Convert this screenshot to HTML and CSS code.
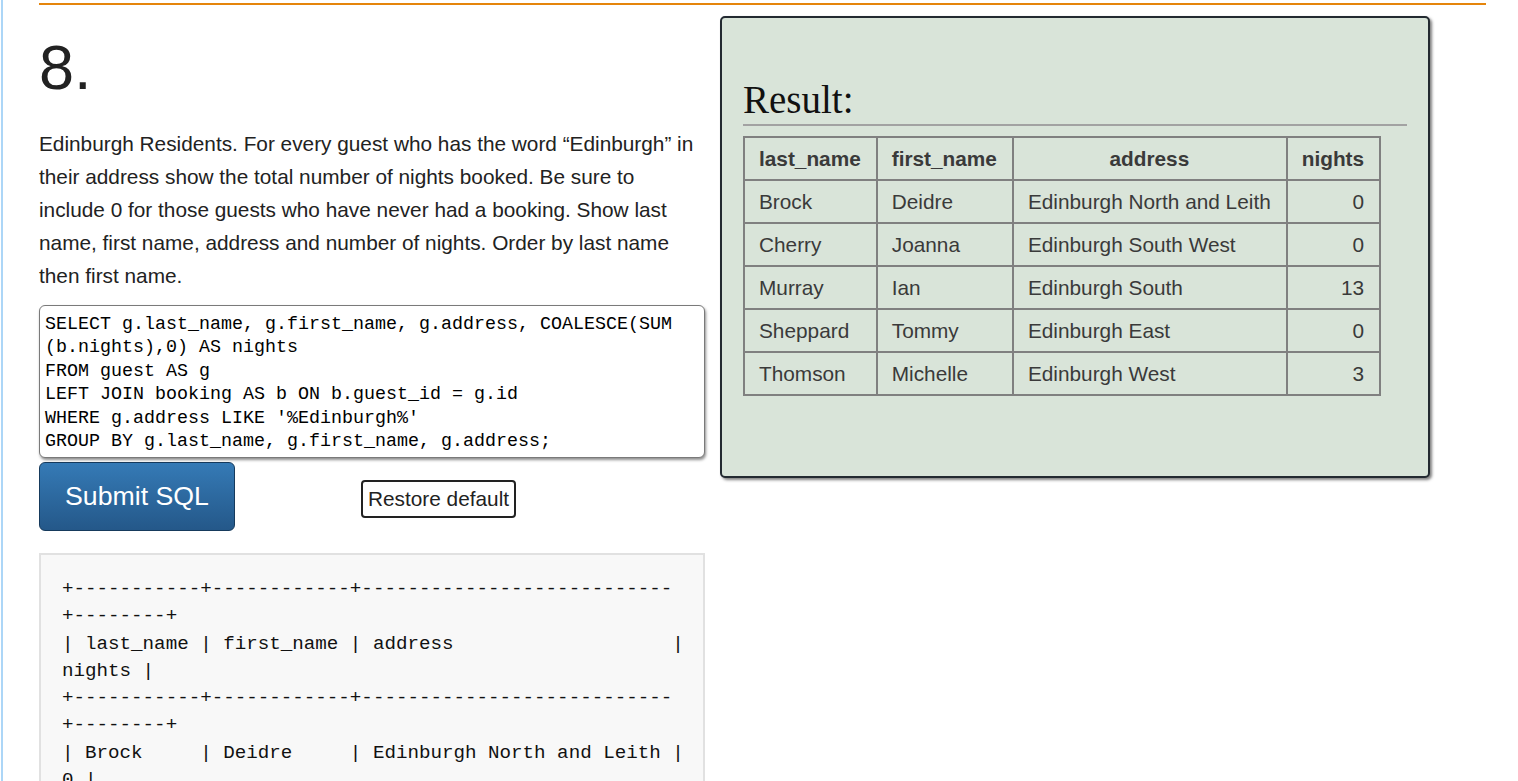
FILE: index.html
```html
<!DOCTYPE html>
<html lang="en">
<head>
<meta charset="utf-8">
<title>SQL Exercise 8</title>
<link rel="stylesheet" href="styles.css">
</head>
<body>
<div class="page">
  <div class="rule"></div>
  <div class="row">
    <div class="left">
      <h1 class="qnum">8.</h1>
      <p class="question">Edinburgh Residents. For every guest who has the word “Edinburgh” in their address show the total number of nights booked. Be sure to include 0 for those guests who have never had a booking. Show last name, first name, address and number of nights. Order by last name then first name.</p>
      <textarea class="sql" spellcheck="false">SELECT g.last_name, g.first_name, g.address, COALESCE(SUM(b.nights),0) AS nights
FROM guest AS g
LEFT JOIN booking AS b ON b.guest_id = g.id
WHERE g.address LIKE '%Edinburgh%'
GROUP BY g.last_name, g.first_name, g.address;</textarea>
      <div class="actions">
        <button class="btn-submit" type="button">Submit SQL</button>
        <button class="btn-restore" type="button">Restore default</button>
      </div>
      <pre class="output">+-----------+------------+---------------------------+--------+
| last_name | first_name | address                   | nights |
+-----------+------------+---------------------------+--------+
| Brock     | Deidre     | Edinburgh North and Leith |      0 |
| Cherry    | Joanna     | Edinburgh South West      |      0 |
| Murray    | Ian        | Edinburgh South           |     13 |
| Sheppard  | Tommy      | Edinburgh East            |      0 |
| Thomson   | Michelle   | Edinburgh West            |      3 |
+-----------+------------+---------------------------+--------+</pre>
    </div>
    <div class="result">
      <h2 class="result-title">Result:</h2>
      <table class="result-table">
        <thead>
          <tr><th>last_name</th><th>first_name</th><th class="center">address</th><th>nights</th></tr>
        </thead>
        <tbody>
          <tr><td>Brock</td><td>Deidre</td><td>Edinburgh North and Leith</td><td class="num">0</td></tr>
          <tr><td>Cherry</td><td>Joanna</td><td>Edinburgh South West</td><td class="num">0</td></tr>
          <tr><td>Murray</td><td>Ian</td><td>Edinburgh South</td><td class="num">13</td></tr>
          <tr><td>Sheppard</td><td>Tommy</td><td>Edinburgh East</td><td class="num">0</td></tr>
          <tr><td>Thomson</td><td>Michelle</td><td>Edinburgh West</td><td class="num">3</td></tr>
        </tbody>
      </table>
    </div>
  </div>
</div>
</body>
</html>
```

FILE: styles.css
```css
* { box-sizing: border-box; }
html, body { margin: 0; padding: 0; background: #fff; }
body { font-family: "Liberation Sans", Arial, sans-serif; color: #222; }

.page {
  margin-left: 1px;
  border-left: 2px solid #acd6f7;
  padding: 3px 32px 0 36px;
  min-height: 100vh;
}
.rule { height: 2px; background: #e5850c; }

.row { display: flex; align-items: flex-start; gap: 15px; margin-top: 11px; }
.left { width: 666px; flex: none; }

.qnum {
  margin: 15px 0 0;
  font-size: 63px;
  font-weight: normal;
  line-height: normal;
  color: #222;
}
.question {
  margin: 24px 0 0;
  font-size: 20.8px;
  line-height: 33px;
  color: #222;
}
.sql {
  display: block;
  width: 666px;
  height: 153px;
  margin: 13px 0 0;
  padding: 7px 28px 3px 5px;
  border: 1px solid #7a7a7a;
  border-radius: 6px;
  box-shadow: 1px 2px 3px rgba(0, 0, 0, 0.45);
  font-family: "Liberation Mono", monospace;
  font-size: 18.33px;
  line-height: 23.4px;
  color: #000;
  background: #fff;
  resize: none;
  overflow: hidden;
  word-break: break-all;
}
.actions { display: flex; align-items: center; margin-top: 4px; }
.btn-submit {
  width: 196px;
  height: 69px;
  padding: 0;
  border: 1px solid #163a5c;
  border-radius: 6px;
  background: linear-gradient(#357ab6, #245889);
  color: #fff;
  font-family: "Liberation Sans", Arial, sans-serif;
  font-size: 26.7px;
}
.btn-restore {
  margin: 5px 0 0 126px;
  height: 38px;
  padding: 0 5px;
  border: 2px solid #222;
  border-radius: 4px;
  background: #fff;
  color: #222;
  font-family: "Liberation Sans", Arial, sans-serif;
  font-size: 20.8px;
  white-space: nowrap;
}
.output {
  margin: 22px 0 0;
  padding: 21px 10px 20px 21px;
  border: 2px solid #e1e1e1;
  background: #f8f8f8;
  font-family: "Liberation Mono", monospace;
  font-size: 19.2px;
  line-height: 27.3px;
  color: #111;
  white-space: pre-wrap;
  overflow-wrap: break-word;
}

.result {
  width: 710px;
  height: 462px;
  flex: none;
  padding: 0 21px;
  border: 2px solid #232a31;
  border-radius: 5px;
  background: #d9e4d9;
  box-shadow: 2px 2px 3px rgba(0, 0, 0, 0.5);
}
.result-title {
  margin: 59px 0 0;
  padding-bottom: 2px;
  border-bottom: 2px solid #a2a2a2;
  font-family: "Liberation Serif", "Times New Roman", serif;
  font-weight: normal;
  font-size: 39px;
  line-height: normal;
  color: #111;
}
.result-table {
  margin-top: 10px;
  border-collapse: collapse;
  border: 2px solid #808080;
  font-size: 20.8px;
  color: #3a3a3a;
}
.result-table th,
.result-table td {
  border: 2px solid #808080;
  padding: 8.5px 15px 8.5px 14px;
  line-height: 24px;
  text-align: left;
}
.result-table th { font-weight: bold; }
.result-table th.center { text-align: center; }
.result-table td.num { text-align: right; }
```
